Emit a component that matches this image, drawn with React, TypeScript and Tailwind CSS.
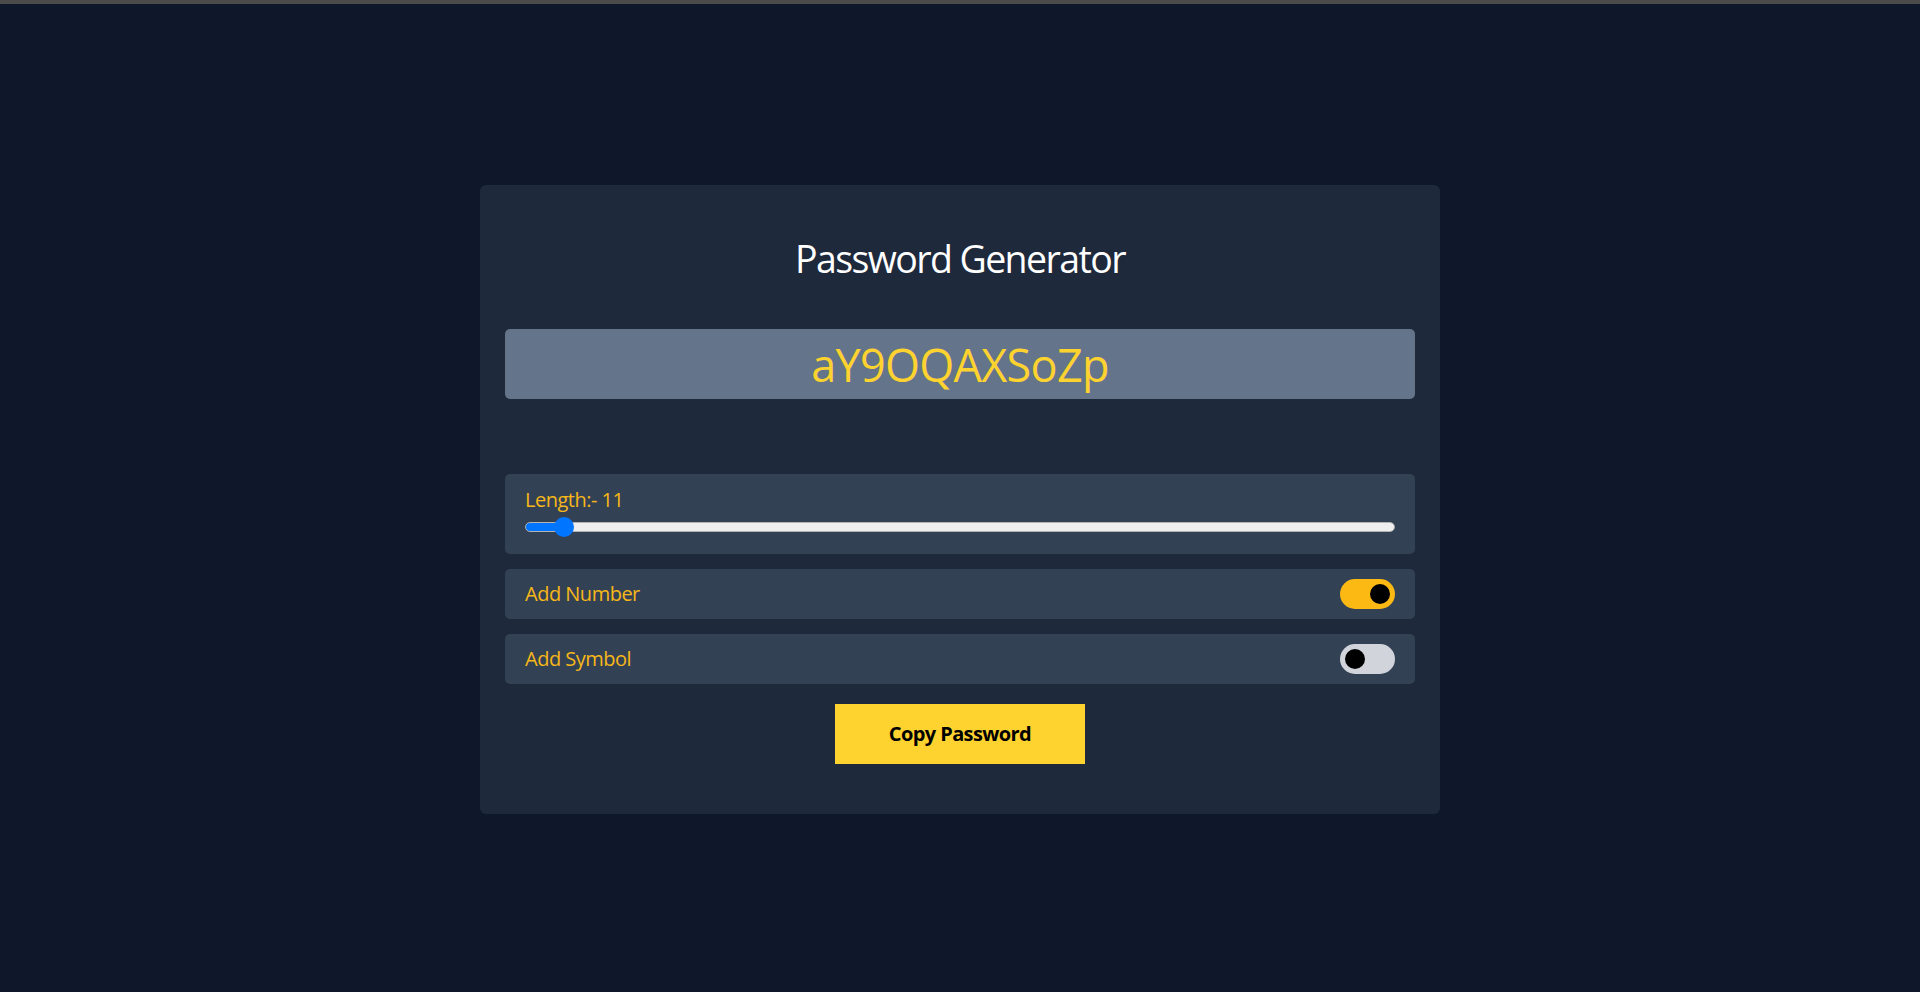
import { useState } from "react";

function Toggle({ on, onClick }: { on: boolean; onClick: () => void }) {
  return (
    <button
      onClick={onClick}
      className={`flex h-[30px] w-[55px] items-center rounded-full px-[5px] ${
        on ? "justify-end bg-[#fdb913]" : "justify-start bg-[#d1d5db]"
      }`}
    >
      <span className="block h-[20px] w-[20px] rounded-full bg-black" />
    </button>
  );
}

export default function App() {
  const [length, setLength] = useState(11);
  const [numbers, setNumbers] = useState(true);
  const [symbols, setSymbols] = useState(false);

  const frac = (length - 8) / (100 - 8);
  const fill = `calc(10px + (100% - 20px) * ${frac})`;

  return (
    <div className="min-h-screen bg-[#0f172a] font-['Segoe_UI','Open_Sans',sans-serif]">
      <div className="h-[4px] bg-[#4b4b4b]" />
      <div className="flex justify-center pt-[181px]">
        <div className="w-[960px] rounded-[6px] bg-[#1e293b] px-[25px] pt-[51px] pb-[50px]">
          <h1 className="text-center text-[37.5px] leading-[45px] tracking-[-1.6px] text-white">Password Generator</h1>

          <div className="mt-[48px] flex h-[70px] items-center justify-center rounded-[5px] bg-[#64748b] pt-[2px] text-[45px] tracking-[-0.7px] text-[#fed330]">
            aY9OQAXSoZp
          </div>

          <div className="mt-[75px] flex h-[80px] flex-col rounded-[5px] bg-[#334155] px-[20px] pt-[12px]">
            <label className="text-[20px] leading-[28px] tracking-[-0.5px] text-[#f7b718]">Length:- {length}</label>
            <div className="mt-[3px] flex h-[20px] items-center">
              <input
                type="range"
                min={8}
                max={100}
                value={length}
                onChange={(e) => setLength(Number(e.target.value))}
                style={{ background: `linear-gradient(to right, #0075ff ${fill}, #efefef ${fill})` }}
                className="h-[10px] w-full cursor-pointer appearance-none rounded-full border border-[#b3b3b3] [&::-webkit-slider-thumb]:h-[20px] [&::-webkit-slider-thumb]:w-[20px] [&::-webkit-slider-thumb]:appearance-none [&::-webkit-slider-thumb]:rounded-full [&::-webkit-slider-thumb]:bg-[#0075ff]"
              />
            </div>
          </div>

          <div className="mt-[15px] flex h-[50px] items-center justify-between rounded-[5px] bg-[#334155] px-[20px]">
            <span className="text-[20px] tracking-[-0.5px] text-[#f7b718]">Add Number</span>
            <Toggle on={numbers} onClick={() => setNumbers(!numbers)} />
          </div>

          <div className="mt-[15px] flex h-[50px] items-center justify-between rounded-[5px] bg-[#334155] px-[20px]">
            <span className="text-[20px] tracking-[-0.5px] text-[#f7b718]">Add Symbol</span>
            <Toggle on={symbols} onClick={() => setSymbols(!symbols)} />
          </div>

          <button className="mx-auto mt-[20px] block h-[60px] w-[250px] bg-[#fed330] text-[20px] font-bold tracking-[-0.6px] text-black">
            Copy Password
          </button>
        </div>
      </div>
    </div>
  );
}
